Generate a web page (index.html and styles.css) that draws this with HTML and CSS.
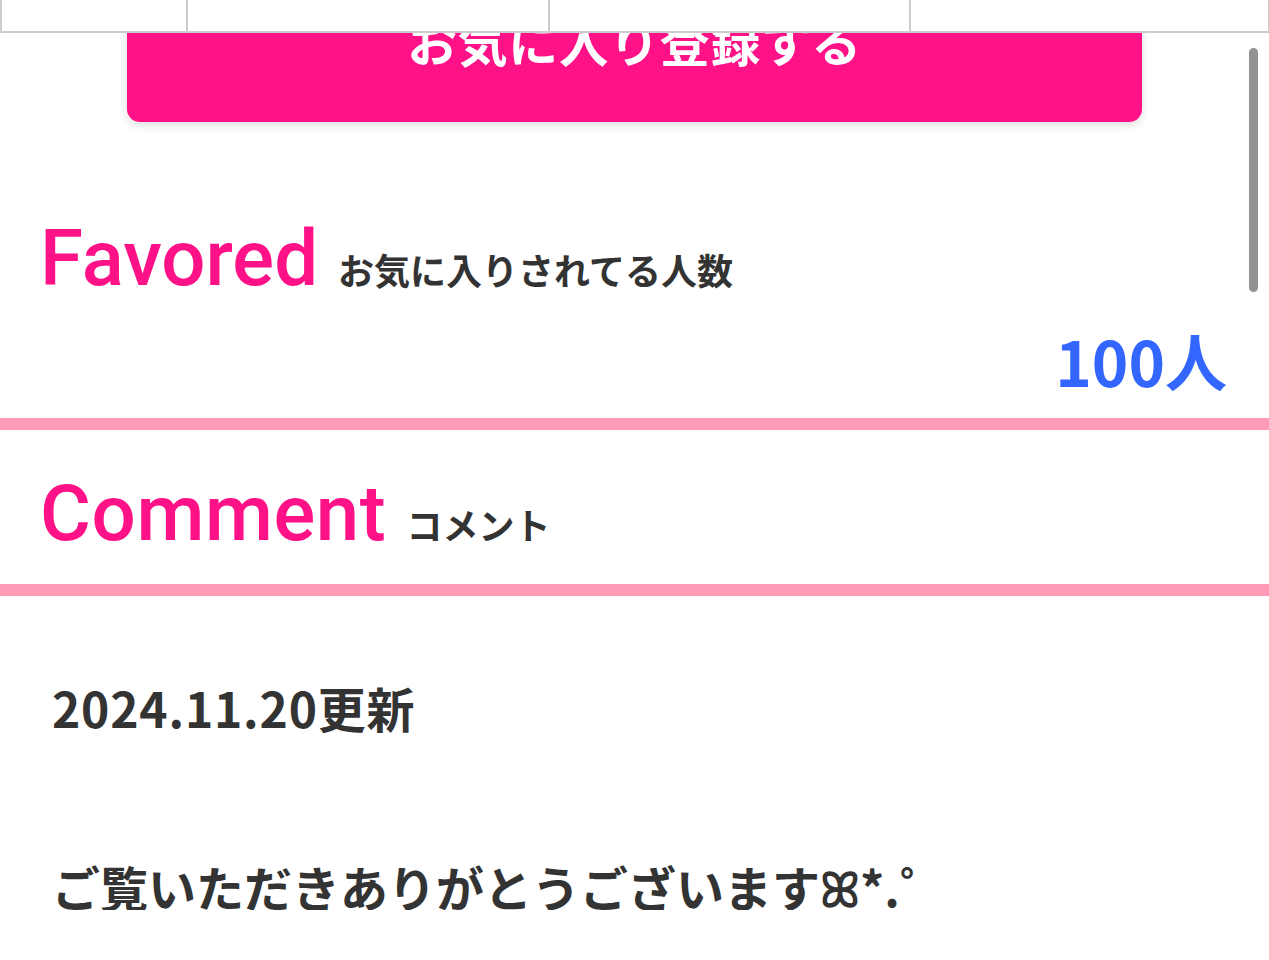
FILE: index.html
```html
<!DOCTYPE html>
<html lang="ja">
<head>
<meta charset="utf-8">
<title>Favored</title>
<link rel="stylesheet" href="styles.css">
</head>
<body>
<nav class="tabs">
  <div class="tab"></div>
  <div class="tab"></div>
  <div class="tab"></div>
  <div class="tab"></div>
</nav>
<div class="scrollbar"></div>
<main class="page">
  <div class="btn-wrap">
    <button class="fav-btn">お気に入り登録する</button>
  </div>
  <section class="section favored">
    <h2 class="heading"><span class="heading-en">Favored</span><span class="heading-ja">お気に入りされてる人数</span></h2>
    <p class="count">100人</p>
  </section>
  <hr class="divider">
  <section class="section comment">
    <h2 class="heading"><span class="heading-en">Comment</span><span class="heading-ja">コメント</span></h2>
  </section>
  <hr class="divider">
  <div class="comment-body">
    <p class="line date">2024.11.20更新</p>
    <p class="line thanks">ご覧いただきありがとうございますꕤ*.゜</p>
  </div>
</main>
</body>
</html>
```
FILE: styles.css
```css
html, body {
  margin: 0;
  padding: 0;
  background: #ffffff;
  overflow: hidden;
}

body {
  font-family: "Noto Sans CJK JP", "Noto Sans", sans-serif;
  color: #333333;
}

.tabs {
  position: fixed;
  top: 0;
  left: 0;
  width: 1268px;
  height: 31px;
  display: grid;
  grid-template-columns: 186px 362px 361px 1fr;
  background: #ffffff;
  border-bottom: 2px solid #cccccc;
  border-left: 2px solid #cccccc;
  box-sizing: content-box;
  z-index: 10;
}

.tab {
  border-right: 2px solid #cccccc;
}

.scrollbar {
  position: fixed;
  top: 48px;
  left: 1249px;
  width: 9px;
  height: 244px;
  border-radius: 5px;
  background: #939393;
  z-index: 11;
}

.page {
  display: flex;
  flex-direction: column;
}

.btn-wrap {
  padding: 0 127px;
}

.fav-btn {
  display: block;
  width: 100%;
  border: none;
  border-radius: 0 0 13px 13px;
  background: #ff1187;
  color: #ffffff;
  font-family: "Noto Sans CJK JP", sans-serif;
  font-weight: 700;
  font-size: 50px;
  line-height: 50px;
  letter-spacing: 0.5px;
  padding: 15px 0 57px;
  box-shadow: 0 3px 10px rgba(0, 0, 0, 0.14);
}

.section {
  padding: 0 42px 0 40px;
}

.heading {
  margin: 0;
  display: flex;
  align-items: baseline;
  gap: 20px;
  font-weight: normal;
}

.heading-en {
  font-family: Roboto, "Liberation Sans", Arial, sans-serif;
  font-size: 78px;
  line-height: 76px;
  font-weight: 500;
  color: #ff1187;
}

.comment .heading-en {
  letter-spacing: 0.6px;
}

.heading-ja {
  font-family: "Noto Sans CJK JP", sans-serif;
  font-size: 36px;
  line-height: 36px;
  font-weight: 700;
  color: #333333;
}

.favored .heading {
  margin-top: 99px;
}

.count {
  margin: 31px 0 26px;
  text-align: right;
  font-size: 62px;
  line-height: 64px;
  font-weight: 700;
  color: #3366ff;
}

.divider {
  margin: 0;
  border: none;
  height: 12px;
  background: #ff9bb6;
}

.comment .heading {
  margin-top: 46px;
  margin-bottom: 32px;
}

.comment-body {
  padding: 87px 40px 0 52px;
}

.line {
  margin: 0;
  font-size: 48px;
  line-height: 48px;
  font-weight: 700;
  color: #333333;
}

.date {
  letter-spacing: 0.8px;
}

.thanks {
  margin-top: 131px;
}
```
